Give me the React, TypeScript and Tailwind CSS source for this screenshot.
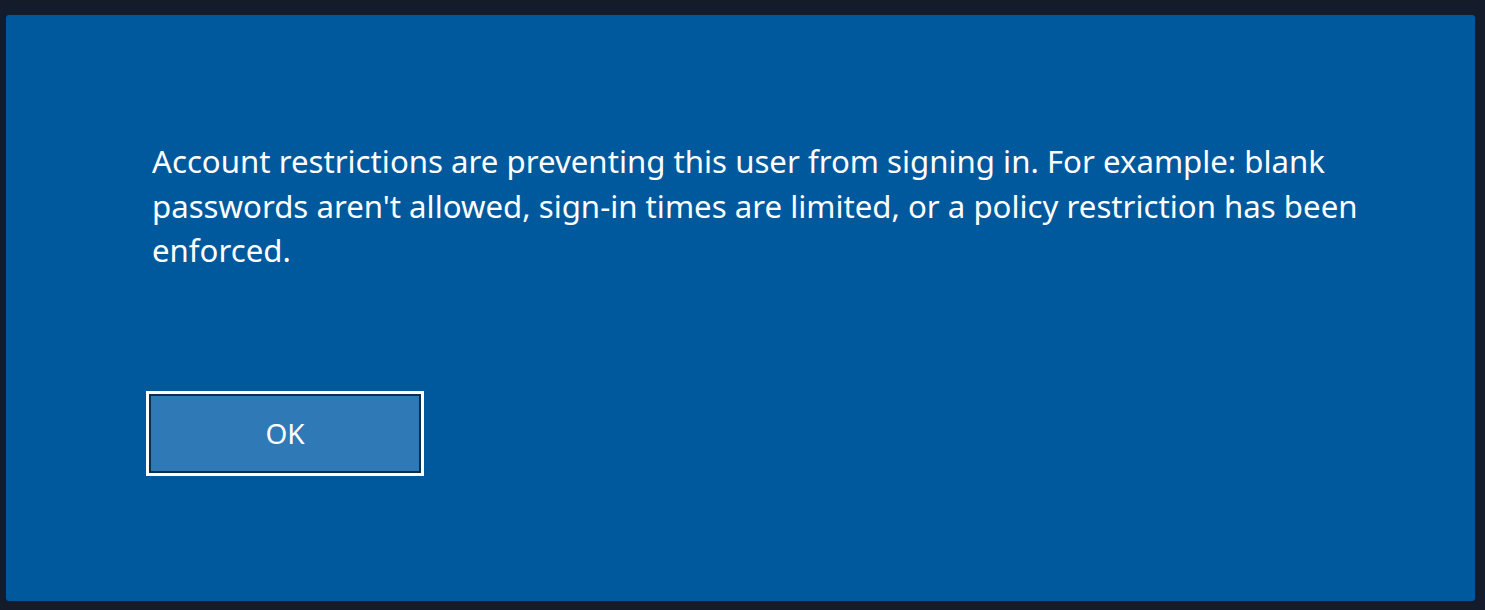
export default function App() {
  return (
    <div className="w-[1485px] h-[610px] bg-[#141b2a] pt-[15px] pl-[6px] pr-[10px] pb-[9px]">
      <div
        className="h-full rounded-[3px] bg-[#01599d] pl-[140px] pt-[124px] text-white"
        style={{ fontFamily: '"Noto Sans", "Open Sans", sans-serif' }}
      >
        <p className="text-[31.2px] leading-[44.5px] max-w-[1246px] pl-[6px]">
          Account restrictions are preventing this user from signing in. For example: blank
          passwords aren't allowed, sign-in times are limited, or a policy restriction has been
          enforced.
        </p>
        <button className="mt-[118px] w-[278px] h-[85px] border-[3px] border-white bg-[#0b2e4d] p-[2px]">
          <span className="flex h-full w-full items-center justify-center bg-[#2f7ab6] text-[28px]">
            OK
          </span>
        </button>
      </div>
    </div>
  )
}
